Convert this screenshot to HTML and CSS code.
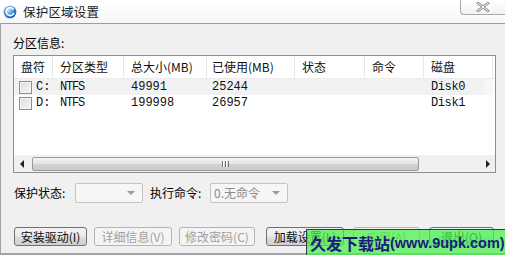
FILE: index.html
```html
<!DOCTYPE html>
<html lang="zh">
<head>
<meta charset="utf-8">
<title>保护区域设置</title>
<link rel="stylesheet" href="styles.css">
</head>
<body>
<div class="window">
  <div class="titlebar">
    <svg class="app-icon" width="14" height="14" viewBox="0 0 14 14">
      <defs>
        <radialGradient id="g" cx="0.4" cy="0.35" r="0.7">
          <stop offset="0" stop-color="#bfe0ff"/>
          <stop offset="0.6" stop-color="#3d86d8"/>
          <stop offset="1" stop-color="#1b4fa0"/>
        </radialGradient>
      </defs>
      <circle cx="7" cy="7" r="6.3" fill="url(#g)"/>
      <path d="M9.8 3.6 A4 4 0 1 0 10.6 8.6" fill="none" stroke="#ffffff" stroke-width="1.6" stroke-linecap="round"/>
      <path d="M8.6 2.4 L11 3.4 L9.6 5.6 Z" fill="#ffffff"/>
    </svg>
    <span class="title">保护区域设置</span>
    <div class="close-btn">
      <svg width="14" height="10" viewBox="0 0 14 10">
        <path d="M2 1 L12 9 M12 1 L2 9" stroke="#8a8a8a" stroke-width="2.6" stroke-linecap="square"/>
        <path d="M2 1 L12 9 M12 1 L2 9" stroke="#ffffff" stroke-width="1" stroke-linecap="square"/>
      </svg>
    </div>
  </div>

  <div class="content">
    <div class="group-label">分区信息:</div>

    <div class="listbox">
      <div class="grid header">
        <div class="hcell">盘符</div>
        <div class="hcell">分区类型</div>
        <div class="hcell">总大小(MB)</div>
        <div class="hcell hcell-tight">已使用(MB)</div>
        <div class="hcell">状态</div>
        <div class="hcell">命令</div>
        <div class="hcell hcell-last">磁盘</div>
      </div>
      <div class="rows">
        <div class="grid row row-hl">
          <div class="cell cell-drive"><span class="checkbox"></span><span class="mono">C:</span></div>
          <div class="cell mono narrow">NTFS</div>
          <div class="cell mono">49991</div>
          <div class="cell mono cell-tight">25244</div>
          <div class="cell"></div>
          <div class="cell"></div>
          <div class="cell mono disk">Disk0</div>
        </div>
        <div class="grid row">
          <div class="cell cell-drive"><span class="checkbox"></span><span class="mono">D:</span></div>
          <div class="cell mono narrow">NTFS</div>
          <div class="cell mono">199998</div>
          <div class="cell mono cell-tight">26957</div>
          <div class="cell"></div>
          <div class="cell"></div>
          <div class="cell mono disk">Disk1</div>
        </div>
      </div>
      <div class="hscroll">
        <div class="arrow arrow-left"></div>
        <div class="thumb"><span class="grip"></span></div>
        <div class="arrow arrow-right"></div>
      </div>
    </div>

    <div class="controls">
      <span class="ctl-label">保护状态:</span>
      <div class="combo combo-state"><span class="combo-text"></span><span class="combo-arrow"></span></div>
      <span class="ctl-label ctl-label-2">执行命令:</span>
      <div class="combo combo-cmd"><span class="combo-text">0.无命令</span><span class="combo-arrow"></span></div>
    </div>

    <div class="buttons">
      <div class="btn btn-active w73">安装驱动(I)</div>
      <div class="btn btn-disabled w78">详细信息(V)</div>
      <div class="btn btn-disabled w76">修改密码(C)</div>
      <div class="btn btn-active w78 gap-wide">加载设置(L)</div>
      <div class="btn btn-disabled w67 gap-mid">应用(A)</div>
      <div class="btn btn-default w65 gap-mid">退出(Q)</div>
    </div>
  </div>

  <div class="watermark"><span class="wm-cn">久发下载站</span><span class="wm-en">(www.9upk.com)</span></div>
</div>
</body>
</html>
```

FILE: styles.css
```css
* { box-sizing: border-box; }

html, body {
  margin: 0;
  padding: 0;
  width: 505px;
  height: 255px;
  overflow: hidden;
  background: #f0f0f0;
}

body {
  font-family: "Noto Sans CJK SC", "Noto Sans", "Liberation Sans", sans-serif;
  font-size: 12px;
  color: #000;
}

.window {
  position: relative;
  width: 505px;
  height: 255px;
  display: flex;
  flex-direction: column;
  background: #f0f0f0;
  border-left: 1px solid #a3a3a3;
  border-bottom: 2px solid #a3a3a3;
}

.titlebar {
  height: 24px;
  flex: none;
  display: flex;
  align-items: center;
  background: linear-gradient(#ffffff, #f7f7f7);
  border-bottom: 1px solid #9c9c9c;
  margin-left: -1px;
}

.app-icon {
  margin-left: 3px;
  margin-right: 6px;
  flex: none;
}

.title {
  font-size: 12.5px;
  line-height: 16px;
  color: #1a1a1a;
  letter-spacing: 0.2px;
}

.close-btn {
  margin-left: auto;
  align-self: flex-start;
  width: 45px;
  height: 15px;
  border: 1px solid #a9a9a9;
  border-top: none;
  border-right: none;
  border-bottom-left-radius: 4px;
  background: linear-gradient(#ffffff, #f1f1f1);
  display: flex;
  align-items: center;
  justify-content: center;
}

.content {
  flex: 1;
  display: flex;
  flex-direction: column;
  padding: 11px 0 0 12px;
}

.group-label {
  line-height: 16px;
  height: 16px;
}

.listbox {
  margin-top: 4px;
  width: 483px;
  height: 118px;
  border: 1px solid #8d8d8d;
  background: #ffffff;
  display: flex;
  flex-direction: column;
}

.grid {
  display: grid;
  grid-template-columns: 39px 71px 83px 88px 70px 59px 69px;
}

.header {
  height: 23px;
  border-bottom: 1px solid #ececec;
  flex: none;
}

.hcell {
  line-height: 22px;
  padding-left: 7px;
  border-right: 1px solid #e8e8e8;
  white-space: nowrap;
  color: #111;
}

.hcell-tight { padding-left: 5px; }
.hcell-last { border-right: 1px solid #e8e8e8; }

.rows {
  flex: 1;
}

.row {
  height: 16px;
}

.row-hl {
  background: linear-gradient(to right, #f2f2f2 0, #f2f2f2 470px, #f7f7f7 470px, #f7f7f7 479px, #ffffff 479px);
}

.cell {
  line-height: 16px;
  padding-left: 7px;
  white-space: nowrap;
}

.cell-tight { padding-left: 5px; }

.cell-drive {
  display: flex;
  align-items: center;
  padding-left: 5px;
}

.mono {
  font-family: "Liberation Mono", "DejaVu Sans Mono", monospace;
  font-size: 12px;
  color: #111;
}

.narrow {
  letter-spacing: -1.2px;
}

.disk {
  letter-spacing: -0.4px;
}

.checkbox {
  width: 13px;
  height: 13px;
  border: 1px solid #8f8f8f;
  background: linear-gradient(135deg, #dcdcdc, #f8f8f8);
  box-shadow: inset 0 0 0 1px #f4f4f4;
  margin-right: 4px;
  flex: none;
}

.hscroll {
  height: 17px;
  flex: none;
  display: flex;
  align-items: center;
  background: #f0f0f0;
  margin-bottom: 0;
}

.arrow {
  width: 17px;
  height: 17px;
  flex: none;
  position: relative;
}

.arrow-left::before,
.arrow-right::before {
  content: "";
  position: absolute;
  top: 5px;
  width: 0;
  height: 0;
  border-top: 4px solid transparent;
  border-bottom: 4px solid transparent;
}

.arrow-left::before {
  left: 6px;
  border-right: 4px solid #222;
}

.arrow-right::before {
  left: 8px;
  border-left: 4px solid #222;
}

.thumb {
  flex: none;
  width: 387px;
  height: 14px;
  margin-left: 1px;
  border: 1px solid #9b9b9b;
  border-radius: 2px;
  background: linear-gradient(#f4f4f4, #e6e6e6 45%, #d2d2d2 55%, #cacaca);
  display: flex;
  align-items: center;
  justify-content: center;
  margin-right: auto;
}

.grip {
  width: 7px;
  height: 6px;
  background: repeating-linear-gradient(to right, #6f6f6f 0, #6f6f6f 1px, #ffffff 1px, #ffffff 2px, transparent 2px, transparent 3px);
}

.controls {
  margin-top: 10px;
  height: 20px;
  display: flex;
  align-items: center;
}

.ctl-label {
  line-height: 16px;
  width: 62px;
  flex: none;
  padding-left: 1px;
}

.ctl-label-2 {
  width: 61px;
  margin-left: 6px;
}

.combo {
  height: 20px;
  border: 1px solid #c4c4c4;
  border-radius: 2px;
  background: #f6f6f6;
  display: flex;
  align-items: center;
  flex: none;
}

.combo-state { width: 68px; }
.combo-cmd { width: 78px; }

.combo-text {
  flex: 1;
  padding-left: 3px;
  color: #8c8c8c;
  line-height: 16px;
  white-space: nowrap;
}

.combo-arrow {
  width: 0;
  height: 0;
  margin-right: 7px;
  border-left: 4px solid transparent;
  border-right: 4px solid transparent;
  border-top: 4px solid #9a9a9a;
}

.buttons {
  margin-top: 24px;
  display: flex;
  padding-left: 1px;
  gap: 7px;
}

.btn {
  height: 19px;
  border-radius: 3px;
  display: flex;
  align-items: center;
  justify-content: center;
  line-height: 16px;
  white-space: nowrap;
  flex: none;
}

.btn-active {
  border: 1px solid #707070;
  background: linear-gradient(#f2f2f2, #ebebeb 48%, #dddddd 52%, #cfcfcf);
  color: #111;
}

.btn-disabled {
  border: 1px solid #b5b5b5;
  background: #f4f4f4;
  color: #a0a0a0;
}

.btn-default {
  border: 1px solid #3c7fb1;
  background: linear-gradient(#eaf6fd, #d9f0fc 48%, #bee6fd 52%, #a7d9f5);
  color: #222;
}

.w73 { width: 73px; }
.w78 { width: 78px; }
.w76 { width: 76px; }
.w67 { width: 67px; }
.w65 { width: 65px; }
.gap-wide { margin-left: 4px; }
.gap-mid { margin-left: 2px; }

.watermark {
  position: absolute;
  right: -1px;
  bottom: -2px;
  width: 200px;
  height: 26px;
  background: rgba(70, 240, 70, 0.72);
  border: 1px solid #3a3a3a;
  border-right: none;
  border-bottom: none;
  display: flex;
  align-items: center;
  padding-left: 3px;
  color: #1b1b80;
  font-weight: bold;
  white-space: nowrap;
}

.wm-cn {
  font-family: "Noto Sans CJK SC", sans-serif;
  font-size: 16px;
  line-height: 20px;
}

.wm-en {
  font-family: "Liberation Sans", "Noto Sans", sans-serif;
  font-size: 14.5px;
  line-height: 20px;
}
```
